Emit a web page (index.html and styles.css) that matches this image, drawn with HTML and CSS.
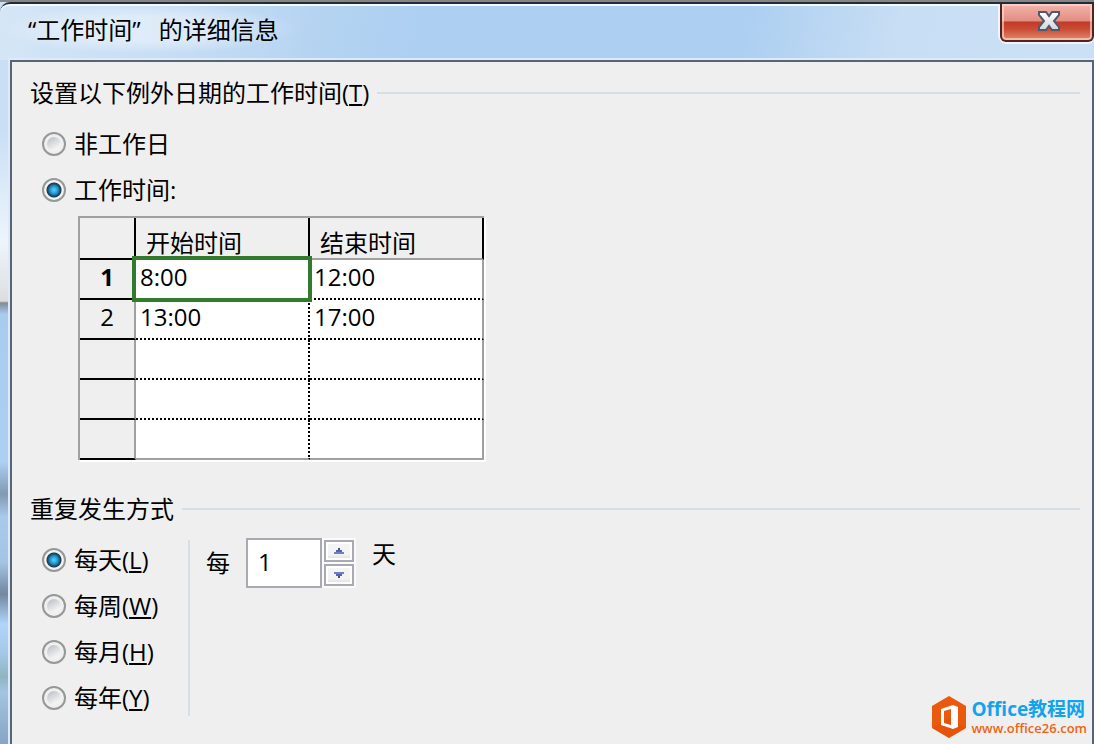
FILE: index.html
```html
<!DOCTYPE html>
<html lang="zh-CN">
    <head>
        <meta charset="utf-8">
        <title>“工作时间”的详细信息</title>
        <link rel="stylesheet" href="styles.css">
    </head>
    <body>
        <div class="window">
            <div class="titlebar">
                <h1><span>“工作时间”</span><span>的详细信息</span></h1>
                <button class="close" type="button" aria-label="关闭">
                    <svg width="24" height="22" viewBox="0 0 24 22">
                        <defs>
                            <linearGradient id="metal" x1="0" y1="0" x2="0" y2="1">
                                <stop offset="0" stop-color="#fff"/>
                                <stop offset="1" stop-color="#d2d6da"/>
                            </linearGradient>
                        </defs>
                        <path d="M2 2H9L12 6L15 2H22V5L17 11L22 17V20H15L12 16L9 20H2V17L7 11L2 5Z" fill="url(#metal)" stroke="#50596b" stroke-width="2"/>
                    </svg>
                </button>
            </div>
            <form class="client">
                <fieldset class="worktime">
                    <legend>设置以下例外日期的工作时间(<u>T</u>)</legend>
                    <label class="option"><input type="radio" name="type">非工作日</label>
                    <label class="option"><input type="radio" name="type" checked>工作时间:</label>
                    <table>
                        <thead>
                            <tr><th class="num"></th><th>开始时间</th><th>结束时间</th></tr>
                        </thead>
                        <tbody>
                            <tr><th class="num current">1</th><td class="selected">8:00</td><td>12:00</td></tr>
                            <tr><th class="num">2</th><td>13:00</td><td>17:00</td></tr>
                            <tr><th class="num"></th><td></td><td></td></tr>
                            <tr><th class="num"></th><td></td><td></td></tr>
                            <tr><th class="num"></th><td></td><td></td></tr>
                        </tbody>
                    </table>
                </fieldset>
                <fieldset>
                    <legend>重复发生方式</legend>
                    <div class="recurrence">
                        <div class="patterns">
                            <label class="option"><input type="radio" name="pattern" checked><span>每天(<u>L</u>)</span></label>
                            <label class="option"><input type="radio" name="pattern"><span>每周(<u>W</u>)</span></label>
                            <label class="option"><input type="radio" name="pattern"><span>每月(<u>H</u>)</span></label>
                            <label class="option"><input type="radio" name="pattern"><span>每年(<u>Y</u>)</span></label>
                        </div>
                        <div class="interval">
                            <label for="days">每</label>
                            <div class="spinner">
                                <input id="days" type="number" min="1" value="1">
                                <div class="arrows">
                                    <button type="button" aria-label="增加"><svg width="10" height="6" viewBox="0 0 10 6"><path d="M0 4H10V6H0Z" fill="#6a7fd0"/><path d="M2 2H8V4H2Z" fill="#5565ac"/><path d="M4 0H6V2H4Z" fill="#4a4f7c"/></svg></button>
                                    <button type="button" aria-label="减少"><svg width="10" height="6" viewBox="0 0 10 6"><path d="M0 0H10V2H0Z" fill="#6a7fd0"/><path d="M2 2H8V4H2Z" fill="#5565ac"/><path d="M4 4H6V6H4Z" fill="#4a4f7c"/></svg></button>
                                </div>
                            </div>
                            <span class="unit">天</span>
                        </div>
                    </div>
                </fieldset>
            </form>
        </div>
        <div class="brand">
            <svg width="36" height="44" viewBox="0 0 36 44">
                <path d="M18 1L35 11V33L18 43L1 33V11Z" fill="#eb5a0c"/>
                <path d="M1 33L18 23L35 33L18 43Z" fill="#d94b08" opacity=".4"/>
                <path d="M10 14L22 10L27 12V32L22 34L10 30ZM13 16V28L20 30V14Z" fill="#fff" fill-rule="evenodd"/>
            </svg>
            <div>
                <div class="brand-name">Office教程网</div>
                <div class="brand-url">www.office26.com</div>
            </div>
        </div>
    </body>
</html>
```

FILE: styles.css
```css
* {
    box-sizing: border-box;
}
body {
    margin: 0;
    overflow: hidden;
    color: #000;
    font-family: "Open Sans", "Noto Sans CJK SC", sans-serif;
    font-size: 24px;
    line-height: 32px;
}
.window {
    display: flex;
    flex-direction: column;
    min-height: 100vh;
    padding-left: 10px;
    border-top: 2px solid #858585;
    background: linear-gradient(#cadff5 60px, #cadff5 130px, #edf5fc 240px, #e1e3e6 286px, #dcdcdc 299px, #808b98 301px, #a9cbee 312px, #adcff2 460px, #8299b2 492px, #a9caec 515px, #a5c4e4 560px, #7288a0 592px, #b0d5fa 622px, #a5c9e8 650px, #8fb5c2 675px, #a4c4e2 690px, #86a5c4 742px);
}

/* title bar */
.titlebar {
    display: flex;
    justify-content: space-between;
    align-items: flex-start;
    height: 58px;
    margin-left: -10px;
    border-top: 2px solid #222c38;
    border-top-left-radius: 10px;
    box-shadow: inset 0 2px #f4f9fe;
    background: linear-gradient(100deg, #d5e6f7 0, #c4dcf4 18%, #b4d3f1 30%, #adcff1 38%, #adcff1 68%, #c8def4 82%, #cbe0f5 100%);
}
h1 {
    display: flex;
    gap: 18px;
    margin: 0;
    padding: 10px 20px 8px 28px;
    font-size: 24px;
    font-weight: 400;
    background: radial-gradient(closest-side, rgba(255, 255, 255, .4) 50%, rgba(255, 255, 255, 0));
}
.close {
    display: flex;
    justify-content: center;
    align-items: center;
    width: 94px;
    height: 38px;
    padding: 0 0 2px 4px;
    border: 2px solid #54221f;
    border-top: 0;
    border-radius: 0 0 6px 6px;
    box-shadow: inset 0 0 0 2px rgba(255, 225, 220, .6), 0 2px #eff5fb, -2px 0 #eff5fb;
    background: linear-gradient(#f3b4ab, #e28e83 47%, #bf3b28 50%, #cc4c34 70%, #dc8c70);
}

/* client area */
.client {
    flex: 1;
    padding: 15px 12px 0 18px;
    border: 2px solid #566577;
    border-bottom: 0;
    box-shadow: 0 0 0 2px #dfeaf6;
    background: #efefef;
}
fieldset {
    min-width: 0;
    margin: 0;
    padding: 0;
    border: 0;
}
.worktime {
    margin-bottom: 33px;
}
legend {
    display: flex;
    align-items: center;
    width: 100%;
    margin-bottom: 12px;
    padding: 0;
}
legend::after {
    content: "";
    flex: 1;
    height: 2px;
    margin-left: 8px;
    background: #d6dfe6;
}
u {
    text-decoration-thickness: 2px;
    text-underline-offset: 2px;
}
.option {
    display: flex;
    align-items: center;
    gap: 8px;
    height: 46px;
    padding-left: 12px;
}
input[type="radio"] {
    appearance: none;
    width: 24px;
    height: 24px;
    margin: 0;
    padding: 3px;
    border: 2px solid #969797;
    border-radius: 50%;
    background: linear-gradient(150deg, #bfc3ca 10%, #f2f2f2 75%) content-box #f4f4f4;
}
input[type="radio"]:checked {
    padding: 0;
    background: radial-gradient(circle, #5fd0f5 0, #1c96cf 4px, #17506f 6px, #1d3b50 7px, #f4f4f4 8px);
}

/* working times grid */
table {
    width: 406px;
    margin: 3px 0 0 48px;
    border-top: 2px solid #a0a0a0;
    border-left: 2px solid #a0a0a0;
    border-spacing: 0;
    box-shadow: 2px 2px #fff;
    table-layout: fixed;
    background: #fff;
}
th, td {
    height: 40px;
    padding: 0 0 0 4px;
    border-right: 2px dotted #000;
    border-bottom: 2px dotted #000;
    font-weight: 400;
    line-height: 34px;
    text-align: left;
    vertical-align: top;
}
thead th {
    height: 42px;
    padding-left: 10px;
    border-right: 2px solid #000;
    border-bottom: 2px solid #a0a0a0;
    line-height: 30px;
    vertical-align: bottom;
    background: #efefef;
}
.num {
    width: 56px;
    padding: 0;
    border-right: 2px solid #a0a0a0;
    border-bottom: 2px solid #000;
    text-align: center;
    background: #efefef;
}
thead .num {
    border-right-color: #000;
    border-bottom-color: #000;
}
.current {
    font-weight: 700;
}
td:last-child {
    border-right: 2px solid #a0a0a0;
}
tr:last-child td {
    border-bottom: 2px solid #a0a0a0;
}
.selected {
    position: relative;
}
.selected::after {
    content: "";
    position: absolute;
    inset: -4px;
    border: 4px solid #327a2e;
}

/* recurrence */
.recurrence {
    display: flex;
    align-items: flex-start;
}
.patterns {
    width: 160px;
    background: linear-gradient(#d3dfe9, #d3dfe9) right 3px / 2px 176px no-repeat;
}
.interval {
    display: flex;
    align-items: center;
    margin-top: 1px;
    padding-left: 16px;
}
.spinner {
    display: flex;
    align-items: center;
    margin: 0 18px 0 16px;
}
input[type="number"] {
    appearance: textfield;
    width: 76px;
    height: 50px;
    margin: 0;
    padding: 0 10px 4px;
    border: 2px solid #a9a9b1;
    border-radius: 0;
    outline: 0;
    font: inherit;
    background: #fff;
}
input[type="number"]::-webkit-inner-spin-button {
    appearance: none;
    margin: 0;
}
.arrows {
    display: flex;
    flex-direction: column;
    gap: 2px;
    margin-left: 2px;
    box-shadow: 0 0 0 2px #fafafa;
    background: #fafafa;
}
.arrows button {
    display: flex;
    justify-content: center;
    align-items: center;
    width: 30px;
    height: 22px;
    padding: 0;
    border: 2px solid #a9a9b1;
    box-shadow: inset 0 0 0 2px #fff;
    background: linear-gradient(#f4f4f4 70%, #d8d8d8);
}
.unit {
    align-self: flex-start;
}

/* corner mark */
.brand {
    display: flex;
    align-items: center;
    gap: 5px;
    position: absolute;
    right: 7px;
    bottom: 5px;
    font-weight: 700;
}
.brand-name {
    color: #12a3ec;
    font-size: 19px;
    line-height: 22px;
}
.brand-url {
    color: #ee6412;
    font-size: 13px;
    line-height: 16px;
    font-weight: 600;
}
```
